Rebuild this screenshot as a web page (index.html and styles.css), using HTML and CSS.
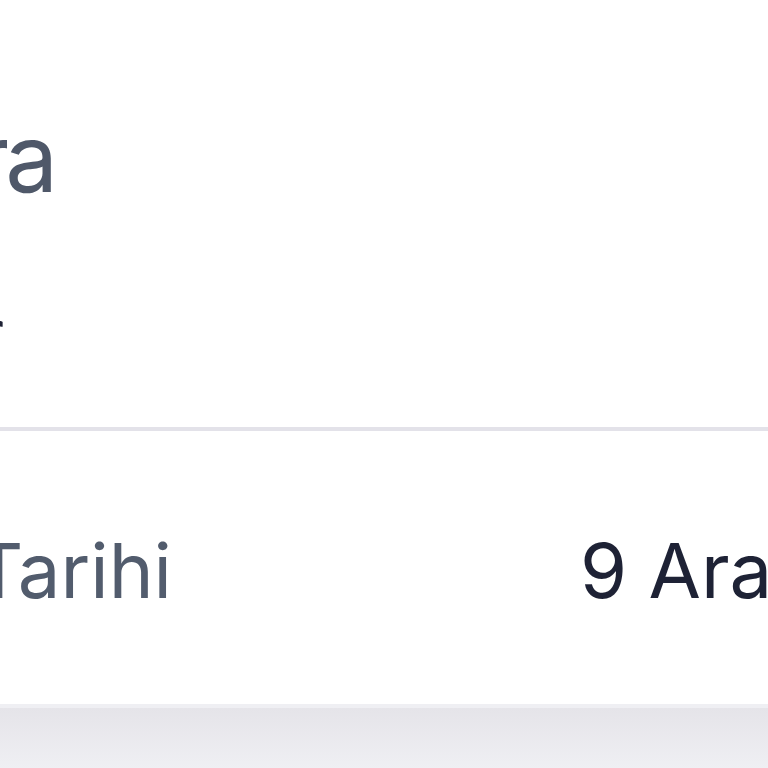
FILE: index.html
```html
<!DOCTYPE html>
<html lang="tr">
<head>
<meta charset="utf-8">
<link rel="stylesheet" href="styles.css">
</head>
<body>
<div class="page">
  <div class="card">
    <div class="head">
      <div class="title"><span>Kira</span></div>
      <div class="sub"><span>Tutar</span></div>
    </div>
    <div class="divider"></div>
    <div class="row">
      <div class="label"><span>Başlangıç Tarihi</span></div>
      <div class="value">9 Aralık 2024</div>
    </div>
  </div>
  <div class="rest"></div>
</div>
</body>
</html>
```
FILE: styles.css
```css
html, body {
  margin: 0;
  padding: 0;
  background: #ffffff;
  overflow: hidden;
}
.page {
  width: 768px;
  height: 768px;
  display: flex;
  flex-direction: column;
  overflow: hidden;
  font-family: Inter, Lato, sans-serif;
}
.card {
  background: #ffffff;
  height: 704px;
  display: flex;
  flex-direction: column;
  flex-shrink: 0;
}
.head {
  height: 427px;
  display: flex;
  flex-direction: column;
}
.title {
  display: flex;
  justify-content: flex-end;
  width: 50px;
  margin-top: 83px;
  white-space: nowrap;
  font-size: 94px;
  line-height: 150px;
  letter-spacing: -4px;
  font-weight: 400;
  color: #4f5869;
}
.title span {
  margin-right: -4px;
}
.sub {
  display: flex;
  justify-content: flex-end;
  width: 4px;
  margin-top: 61px;
  white-space: nowrap;
  font-size: 64px;
  line-height: 80px;
  color: #1e2235;
}
.divider {
  height: 4px;
  background: #e3e2e9;
}
.row {
  flex: 1;
  display: flex;
  align-items: center;
  gap: 408px;
  white-space: nowrap;
  padding-top: 4px;
}
.label {
  width: 172px;
  display: flex;
  justify-content: flex-end;
  font-size: 76px;
  color: #525c6d;
}
.value {
  font-size: 76px;
  color: #1e2235;
}
.rest {
  flex: 1;
  border-top: 4px solid #efeff3;
  background: linear-gradient(#e5e4e9, #efeff3);
}
```
